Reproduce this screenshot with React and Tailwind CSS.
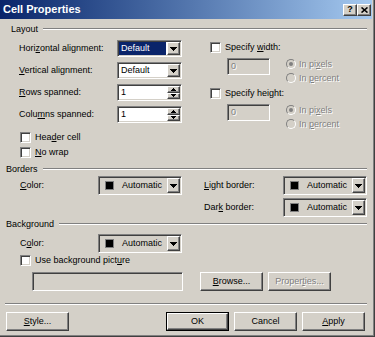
import React from 'react'

const raised = 'border border-t-white border-l-white border-r-[#404040] border-b-[#404040] shadow-[inset_-1px_-1px_0_#808080] bg-[#d4d0c8]'
const sunken = 'border border-t-[#808080] border-l-[#808080] border-r-white border-b-white shadow-[inset_1px_1px_0_#404040,inset_-1px_-1px_0_#d4d0c8]'
const dim = 'text-[#808080] [text-shadow:1px_1px_0_#ffffff]'

function U({ children }) {
  return <span className="underline decoration-1 underline-offset-1">{children}</span>
}

function Tri({ up, w = 7, h = 4, color = '#000' }) {
  return (
    <svg width={w} height={h} viewBox={`0 0 ${w} ${h}`} shapeRendering="crispEdges">
      <path d={up ? `M${w / 2} 0L${w} ${h}H0Z` : `M0 0H${w}L${w / 2} ${h}Z`} fill={color} />
    </svg>
  )
}

function DropBtn() {
  return (
    <div className={`${raised} w-[13px] h-full shrink-0 flex items-center justify-center`}>
      <Tri w={7} h={4} />
    </div>
  )
}

function Select({ focused }) {
  return (
    <div className={`${sunken} p-[1px] flex h-[17px] w-[65px] bg-white`}>
      <div className="flex-1 flex items-center pr-[1px]">
        {focused ? (
          <span className="flex-1 h-full flex items-center pl-[2px] bg-[#0a246a] text-white">Default</span>
        ) : (
          <span className="pl-[2px]">Default</span>
        )}
      </div>
      <DropBtn />
    </div>
  )
}

function Spin({ value }) {
  return (
    <div className={`${sunken} p-[1px] flex h-[17px] w-[65px] bg-white`}>
      <div className="flex-1 flex items-center pl-[2px]">{value}</div>
      <div className="flex flex-col w-[13px] shrink-0">
        <div className={`${raised} flex-1 flex items-center justify-center`}><Tri up w={5} h={3} /></div>
        <div className={`${raised} flex-1 flex items-center justify-center`}><Tri w={5} h={3} /></div>
      </div>
    </div>
  )
}

function ColorPick() {
  return (
    <div className={`${sunken} p-[1px] flex h-[19px] w-[84px]`}>
      <div className="flex-1 flex items-center pl-[5px]">
        <div className="w-[9px] h-[9px] bg-black border border-[#808080]" />
        <span className="ml-[8px]">Automatic</span>
      </div>
      <DropBtn />
    </div>
  )
}

function Check({ children }) {
  return (
    <div className="flex items-center h-[14px]">
      <div className={`${sunken} w-[11px] h-[11px] bg-white shrink-0`} />
      <span className="ml-[4px]">{children}</span>
    </div>
  )
}

function Radio({ on, children }) {
  return (
    <div className="flex items-center h-[14px]">
      <div className="w-[10px] h-[10px] rounded-full border border-t-[#808080] border-l-[#808080] border-r-white border-b-white flex items-center justify-center shrink-0">
        {on && <div className="w-[4px] h-[4px] rounded-full bg-[#808080]" />}
      </div>
      <span className={`ml-[3px] ${dim}`}>{children}</span>
    </div>
  )
}

function SizeBlock() {
  return (
    <div className="flex mt-[3px]">
      <div className={`${sunken} ml-[17px] mt-[1px] w-[43px] h-[17px] flex items-center pl-[3px] ${dim}`}>0</div>
      <div className="flex flex-col ml-[16px]">
        <Radio on>In pi<U>x</U>els</Radio>
        <Radio>In <U>p</U>ercent</Radio>
      </div>
    </div>
  )
}

function Section({ label, pl }) {
  return (
    <div className={`flex items-center h-[10px] pr-[8px] ${pl}`}>
      <span>{label}</span>
      <div className="flex-1 ml-[5px] h-[2px] border-t border-t-[#808080] border-b border-b-white" />
    </div>
  )
}

function Btn({ children, disabled, def }) {
  const inner = (
    <div className={`${raised} w-full h-full flex items-center justify-center ${disabled ? dim : ''}`}>{children}</div>
  )
  if (def) return <div className="w-[63px] h-[19px] border border-black">{inner}</div>
  return <div className="w-[63px] h-[19px]">{inner}</div>
}

export default function App() {
  return (
    <div className="w-[375px] h-[337px] bg-[#d4d0c8] font-['Liberation_Sans',Arial,sans-serif] text-[9px] leading-none text-black flex flex-col overflow-hidden shadow-[inset_-1px_-1px_0_#404040,inset_-2px_-2px_0_#808080]">
      {/* Title bar */}
      <div className="w-[372px] h-[19px] shrink-0 bg-linear-to-r from-[#0a246a] to-[#a6caf0] flex items-center pl-[3px] pr-[1px]">
        <span className="flex-1 text-white font-bold text-[11px]">Cell Properties</span>
        <div className={`${raised} w-[14px] h-[12px] flex items-center justify-center font-bold text-[9px]`}>?</div>
        <div className={`${raised} w-[14px] h-[12px] flex items-center justify-center`}>
          <svg width="7" height="6" viewBox="0 0 7 6">
            <path d="M0.5 0.5L6.5 5.5M6.5 0.5L0.5 5.5" stroke="#000" strokeWidth="1.6" />
          </svg>
        </div>
      </div>

      {/* Layout */}
      <div className="mt-[5px]"><Section label="Layout" pl="pl-[11px]" /></div>
      <div className="flex mt-[6px]">
        <div className="w-[208px] pl-[19px] flex flex-col">
          <div className="flex flex-col gap-[5px]">
            <div className="flex items-center h-[17px]">
              <span className="w-[98px]">Hori<U>z</U>ontal alignment:</span>
              <Select focused />
            </div>
            <div className="flex items-center h-[17px]">
              <span className="w-[98px]"><U>V</U>ertical alignment:</span>
              <Select />
            </div>
            <div className="flex items-center h-[17px]">
              <span className="w-[98px]"><U>R</U>ows spanned:</span>
              <Spin value="1" />
            </div>
            <div className="flex items-center h-[17px]">
              <span className="w-[98px]">Colu<U>m</U>ns spanned:</span>
              <Spin value="1" />
            </div>
          </div>
          <div className="flex flex-col gap-[1px] mt-[7px] pl-[1px]">
            <Check>Hea<U>d</U>er cell</Check>
            <Check><U>N</U>o wrap</Check>
          </div>
        </div>
        <div className="flex flex-col pl-[2px]">
          <Check>Specify <U>w</U>idth:</Check>
          <SizeBlock />
          <div className="mt-[1px]"><Check>Specify hei<U>g</U>ht:</Check></div>
          <SizeBlock />
        </div>
      </div>

      {/* Borders */}
      <div className="mt-[5px]"><Section label="Borders" pl="pl-[6px]" /></div>
      <div className="flex flex-col gap-[3px] mt-[2px]">
        <div className="flex items-center h-[19px] pl-[20px]">
          <span className="w-[78px]"><U>C</U>olor:</span>
          <ColorPick />
          <span className="w-[79px] ml-[22px]"><U>L</U>ight border:</span>
          <ColorPick />
        </div>
        <div className="flex items-center h-[19px] pl-[204px]">
          <span className="w-[79px]">Dar<U>k</U> border:</span>
          <ColorPick />
        </div>
      </div>

      {/* Background */}
      <div className="mt-[2px]"><Section label="Background" pl="pl-[6px]" /></div>
      <div className="flex items-center h-[19px] pl-[20px] mt-[5px]">
        <span className="w-[78px]">C<U>o</U>lor:</span>
        <ColorPick />
      </div>
      <div className="pl-[20px]"><Check>Use background pict<U>u</U>re</Check></div>
      <div className="flex items-center h-[19px] mt-[5px] pl-[32px]">
        <div className={`${sunken} w-[151px] h-full`} />
        <div className="ml-[17px]"><Btn><span><U>B</U>rowse...</span></Btn></div>
        <div className="ml-[5px]"><Btn disabled><span>Proper<U>t</U>ies...</span></Btn></div>
      </div>

      {/* Footer */}
      <div className="mt-[12px] mx-[5px] mr-[8px] h-[2px] border-t border-t-[#808080] border-b border-b-white" />
      <div className="flex items-center mt-[7px] pl-[6px]">
        <Btn><span><U>S</U>tyle...</span></Btn>
        <div className="ml-[97px]"><Btn def>OK</Btn></div>
        <div className="ml-[5px]"><Btn>Cancel</Btn></div>
        <div className="ml-[5px]"><Btn><span><U>A</U>pply</span></Btn></div>
      </div>
    </div>
  )
}
